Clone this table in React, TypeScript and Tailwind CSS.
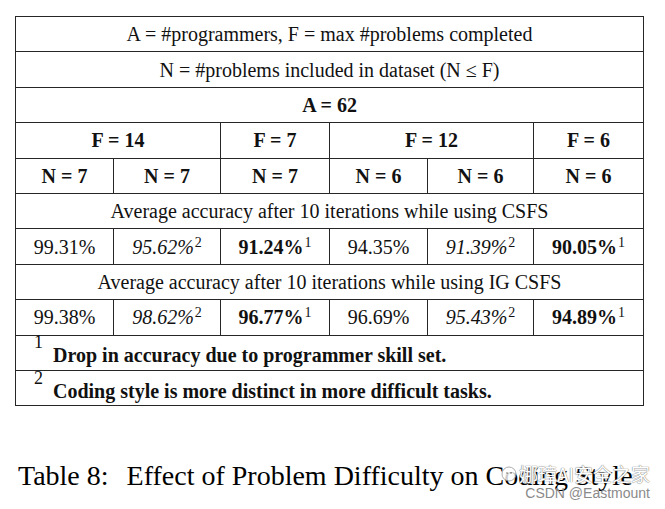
import React from 'react';

const cell = 'border-[1.5px] border-[#262626] h-[35.4px] p-0 text-center align-middle';

const Sup = ({ n }: { n: string }) => (
  <sup className="not-italic font-normal text-[14px] relative -top-[7px] ml-[1px]">{n}</sup>
);

const App = () => {
  return (
    <div className="relative w-[665px] h-[509px] bg-white overflow-hidden font-['Liberation_Serif',serif] text-[#111]">
      <div className="pl-[15px] pt-[16px]">
        <table className="border-collapse table-fixed w-[628px] text-[20px] leading-none">
          <colgroup>
            <col className="w-[98px]" />
            <col className="w-[107px]" />
            <col className="w-[109px]" />
            <col className="w-[98px]" />
            <col className="w-[106px]" />
            <col className="w-[110px]" />
          </colgroup>
          <tbody>
            <tr>
              <td colSpan={6} className={cell}>A = #programmers, F = max #problems completed</td>
            </tr>
            <tr>
              <td colSpan={6} className={cell}>N = #problems included in dataset (N ≤ F)</td>
            </tr>
            <tr>
              <td colSpan={6} className={`${cell} font-bold`}>A = 62</td>
            </tr>
            <tr className="font-bold">
              <td colSpan={2} className={cell}>F = 14</td>
              <td className={cell}>F = 7</td>
              <td colSpan={2} className={cell}>F = 12</td>
              <td className={cell}>F = 6</td>
            </tr>
            <tr className="font-bold">
              <td className={cell}>N = 7</td>
              <td className={cell}>N = 7</td>
              <td className={cell}>N = 7</td>
              <td className={cell}>N = 6</td>
              <td className={cell}>N = 6</td>
              <td className={cell}>N = 6</td>
            </tr>
            <tr>
              <td colSpan={6} className={cell}>Average accuracy after 10 iterations while using CSFS</td>
            </tr>
            <tr>
              <td className={cell}>99.31%</td>
              <td className={`${cell} italic`}>95.62%<Sup n="2" /></td>
              <td className={`${cell} font-bold`}>91.24%<Sup n="1" /></td>
              <td className={cell}>94.35%</td>
              <td className={`${cell} italic`}>91.39%<Sup n="2" /></td>
              <td className={`${cell} font-bold`}>90.05%<Sup n="1" /></td>
            </tr>
            <tr>
              <td colSpan={6} className={cell}>Average accuracy after 10 iterations while using IG CSFS</td>
            </tr>
            <tr>
              <td className={cell}>99.38%</td>
              <td className={`${cell} italic`}>98.62%<Sup n="2" /></td>
              <td className={`${cell} font-bold`}>96.77%<Sup n="1" /></td>
              <td className={cell}>96.69%</td>
              <td className={`${cell} italic`}>95.43%<Sup n="2" /></td>
              <td className={`${cell} font-bold`}>94.89%<Sup n="1" /></td>
            </tr>
            <tr>
              <td colSpan={6} className={`${cell} text-left`}>
                <div className="flex items-start pl-[18px]">
                  <span className="text-[18px] -mt-[7px] w-[19px]">1</span>
                  <span className="font-bold mt-[5px]">Drop in accuracy due to programmer skill set.</span>
                </div>
              </td>
            </tr>
            <tr>
              <td colSpan={6} className={`${cell} text-left`}>
                <div className="flex items-start pl-[18px]">
                  <span className="text-[18px] -mt-[7px] w-[19px]">2</span>
                  <span className="font-bold mt-[5px]">Coding style is more distinct in more difficult tasks.</span>
                </div>
              </td>
            </tr>
          </tbody>
        </table>
        <p className="mt-[56px] ml-[3px] text-[28px] leading-none text-black whitespace-nowrap">
          Table 8:<span className="ml-[18px]">Effect of Problem Difficulty on Coding Style</span>
        </p>
      </div>

      {/* watermark */}
      <div className="absolute right-[15px] top-[464px] flex flex-col items-end">
        <div className="flex items-center gap-[2px]">
          <svg width="16" height="16" viewBox="0 0 16 16" className="opacity-80">
            <circle cx="8" cy="8" r="7" fill="white" stroke="#999" strokeWidth="1" />
            <circle cx="6" cy="7" r="1" fill="#999" />
            <circle cx="10" cy="7" r="1" fill="#999" />
          </svg>
          <span className="text-[19px] leading-none text-white font-['Noto_Sans_CJK_SC',sans-serif] [text-shadow:0_0_1px_#777,0_0_1px_#777]">
            娜璋AI安全之家
          </span>
        </div>
        <span className="text-[14px] leading-none mt-[3px] text-[#8a8a8a] font-['Liberation_Sans',sans-serif]">
          CSDN @Eastmount
        </span>
      </div>
    </div>
  );
};

export default App;
